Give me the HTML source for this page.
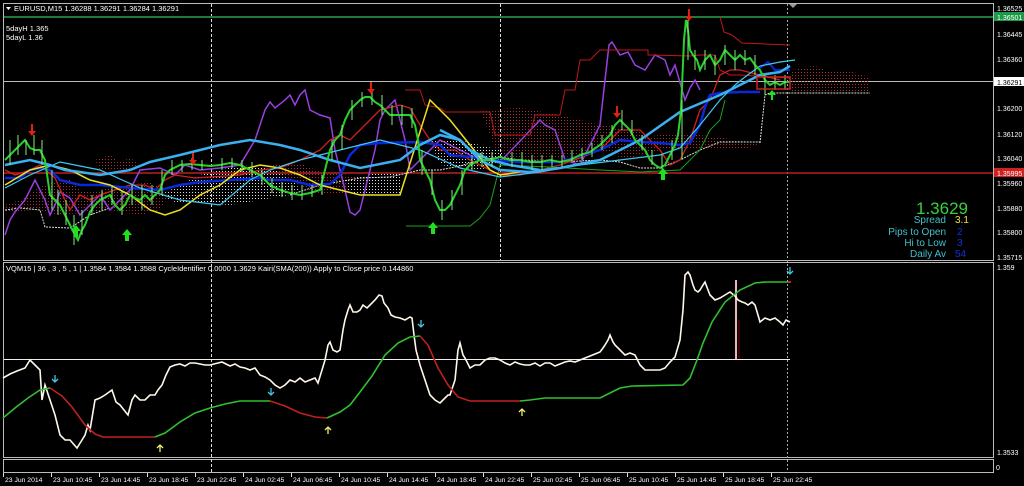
<!DOCTYPE html>
<html><head><meta charset="utf-8"><style>
html,body{margin:0;padding:0;background:#000;width:1024px;height:486px;overflow:hidden}
svg{display:block}
text{font-family:"Liberation Sans",sans-serif;font-size:8px;fill:#fff}
</style></head><body>
<svg width="1024" height="486" viewBox="0 0 1024 486" xmlns="http://www.w3.org/2000/svg">
<defs>
<pattern id="dr" width="3" height="3" patternUnits="userSpaceOnUse"><rect x="0" y="0" width="1" height="1" fill="#b03030"/></pattern>
<pattern id="dw" width="3" height="3" patternUnits="userSpaceOnUse"><rect x="0" y="0" width="1" height="1" fill="#ddd"/></pattern>
</defs>
<rect width="1024" height="486" fill="#000"/>
<rect x="3.5" y="3.5" width="990" height="257" fill="none" stroke="#bbb"/>
<rect x="3.5" y="262.5" width="990" height="195" fill="none" stroke="#bbb"/>
<rect x="3.5" y="459.5" width="990" height="13" fill="none" stroke="#bbb"/>
<line x1="211.5" y1="4" x2="211.5" y2="473" stroke="#ddd" stroke-dasharray="3,2"/>
<line x1="500.5" y1="4" x2="500.5" y2="260" stroke="#ddd" stroke-dasharray="3,2"/>
<line x1="787.5" y1="4" x2="787.5" y2="473" stroke="#aaa" stroke-dasharray="2,2"/>
<line x1="4" y1="17" x2="993" y2="17" stroke="#1d7a3a" stroke-width="2"/>
<line x1="4" y1="81.5" x2="993" y2="81.5" stroke="#bbb"/>
<line x1="4" y1="173" x2="993" y2="173" stroke="#b82020" stroke-width="1.5"/>
<line x1="4" y1="359.5" x2="790" y2="359.5" stroke="#eee"/>
<path d="M6 7 L11 7 L8.5 10 Z" fill="#fff"/>
<text x="14" y="11" style="font-size:7.5px">EURUSD,M15  1.36288 1.36291 1.36284 1.36291</text>
<text x="6" y="31" style="font-size:7.5px">5dayH 1.365</text>
<text x="6" y="40" style="font-size:7.5px">5dayL 1.36</text>
<path d="M5 205 L20 200 L35 190 L50 182 L70 180 L80 190 L100 195 L120 200 L130 205 L110 210 L60 215 L35 210 L5 212Z" fill="url(#dr)"/>
<path d="M95 160 L110 155 L120 162 L130 158 L140 164 L125 172 L100 170Z" fill="url(#dr)"/>
<path d="M75 195 L100 190 L130 185 L150 182 L170 194 L160 210 L140 215 L110 210 L85 210Z" fill="url(#dr)"/>
<path d="M160 195 L200 175 L240 165 L280 170 L290 175 L300 190 L290 195 L260 200 L230 205 L200 203 L175 202Z" fill="url(#dw)"/>
<path d="M270 165 L300 163 L320 172 L350 175 L360 178 L360 195 L320 195 L290 180Z" fill="url(#dr)"/>
<path d="M480 110 L520 108 L560 115 L600 125 L640 130 L650 145 L620 150 L580 155 L540 160 L500 160Z" fill="url(#dr)"/>
<path d="M430 140 L460 140 L480 145 L500 150 L510 160 L480 170 L440 165Z" fill="url(#dw)"/>
<path d="M620 140 L660 135 L700 135 L740 140 L760 145 L740 150 L700 150 L660 150 L630 158 L618 160Z" fill="url(#dr)"/>
<path d="M790 72 L800 68 L815 66 L825 70 L845 70 L860 74 L870 78 L870 93 L790 93Z" fill="url(#dr)"/>
<path d="M345 180 L380 172 L400 172 L400 195 L370 195 L350 195Z" fill="url(#dw)"/>
<polyline points="5,210 20,208 40,210 45,227 70,228 90,215 110,208" fill="none" stroke="#ddd" stroke-dasharray="2,1"/>
<polyline points="290,195 320,185 360,178 390,177 420,170 440,170 460,166 480,160 500,157 520,160 560,162 600,160 620,162 640,168 660,168 680,160 700,150 720,142 760,142" fill="none" stroke="#ddd" stroke-dasharray="2,1"/>
<polyline points="760,143 765,95 770,93 790,93 870,93" fill="none" stroke="#ddd" stroke-dasharray="2,1"/>
<polyline points="5,235 10,220 15,212 25,200 30,190 35,180 40,190 45,200 50,215 55,205 60,192 70,198 80,215 90,205 100,195 110,210 130,190 140,170 160,168 175,175 185,165 200,170 220,168 240,165 255,140 265,110 270,102 275,108 285,100 290,95 295,105 300,95 305,90 310,110 320,115 330,118 335,150 340,170 345,190 350,212 355,215 360,210 365,190 375,150 380,120 385,110 395,100 400,120 405,140 410,170 420,160 430,150 440,140 460,150 480,160 500,162 540,120 545,125 555,130 565,160 580,165 600,125 605,80 609,45 612,42 620,55 628,52 635,65 645,70 655,55 665,60 670,75 675,65 685,100 690,88 695,80 700,90" fill="none" stroke="#9a3fe0" stroke-width="1.5"/>
<polyline points="5,170 15,175 30,170 40,165 55,178 65,200 70,210 80,195 90,200 100,195 115,190 130,185 145,185 155,190 165,180 175,175 195,178 240,175 260,170 280,168 300,160 320,150 330,140 340,135 350,140 360,130 370,120 380,110 400,105 410,108 420,125 430,140 440,150 455,150 470,160 480,165 500,175 520,175 540,170 560,165 580,158 600,150 610,140 620,130 640,130 650,140 660,150 670,165 680,160 690,140 700,110 710,100 720,75 730,70 740,70 760,75 780,80" fill="none" stroke="#d02020" stroke-width="1.3"/>
<polyline points="405,90 420,90 425,105 440,108 445,112 490,112 495,135 530,135 535,115 560,115 565,90 575,90 580,60 590,60 600,50 648,50 648,55 650,55 690,56 700,55 715,55 720,70 730,75 740,75 790,78" fill="none" stroke="#c01818" stroke-width="1"/>
<polyline points="720,17 724,32 732,35 742,43 790,45" fill="none" stroke="#c01818" stroke-width="1"/>
<polyline points="406,226 470,226 480,218 490,205 495,185 500,165 550,167 600,170 640,172 680,170 700,150 710,130 720,120 725,100" fill="none" stroke="#1ca01c" stroke-width="1"/>
<polyline points="5,178 20,178 30,170 40,168 50,170 60,180 80,185 100,185 130,188 160,190 180,185 200,182 230,180 260,178 270,180 290,180 310,185 330,184 340,175 350,155 360,145 380,143 420,142 440,145 450,155 470,157 490,160 520,162 560,162 600,150 620,140 640,142 660,143 680,145 690,143 700,125 705,107 710,95 720,93 740,92 760,92" fill="none" stroke="#0a28d8" stroke-width="2.5"/>
<polyline points="760,68 768,62 775,70 790,70" fill="none" stroke="#0a28d8" stroke-width="2"/>
<polyline points="5,185 30,170 50,165 70,170 90,180 110,185 130,195 150,210 165,215 180,210 200,195 220,185 240,170 260,165 280,168 300,175 320,185 340,190 360,195 400,195 430,100 450,120 470,145 490,170 500,175 520,172" fill="none" stroke="#f0e020" stroke-width="1.5"/>
<polyline points="5,188 30,175 60,162 100,170 140,188 180,200 220,205 250,180 270,170 300,160 340,150 380,140 420,150 460,168 500,177 540,172 580,165 620,160 660,155 680,148 700,125 720,100 735,85 745,77 760,66 780,62 795,60" fill="none" stroke="#40c8f0" stroke-width="1.2"/>
<polyline points="5,165 30,160 50,165 65,170 80,172 100,175 130,170 150,162 180,155 220,145 250,140 280,145 300,150 330,160 360,168 400,160 420,145 440,135 460,140 480,160 500,170 530,172 560,168 600,160 640,140 680,112 720,95 740,85 760,75 780,72 790,66" fill="none" stroke="#3ab0f0" stroke-width="2.5"/>
<polyline points="440,130 460,140 470,150 490,160 510,165 540,170" fill="none" stroke="#3ab0f0" stroke-width="2.5"/>
<g fill="none" stroke="#2ad02a">
<polyline stroke-width="2" points="5,160 10,155 15,150 20,145 25,140 30,148 35,150 40,150 45,160 50,195 55,200 60,205 65,215 70,225 75,235 78,240 82,230 85,225 90,212 95,205 100,200 110,195 115,205 120,210 125,205 130,195 135,198 140,200 145,195 150,200 155,195 160,190 165,175 170,170 180,165 190,164 200,165 210,166 220,165 230,163 240,165 250,170 260,175 270,185 280,190 290,193 300,195 310,193 320,190 325,170 330,150 335,140 340,135 345,120 350,110 355,105 360,100 365,97 370,97 375,102 380,105 385,110 390,115 400,115 410,115 415,125 418,140 420,160 425,170 430,180 435,200 440,210 445,210 450,205 455,195 460,185 465,170 470,165 480,160 490,160 500,157 510,160 520,160 530,162 540,162 550,160 560,162 570,160 580,155 590,152 600,145 610,135 615,125 620,120 625,125 630,130 635,140 640,145 645,150 650,160 655,165 660,168 665,165 670,155 675,145 678,135 681,110 684,40 686,20 688,30 690,50 693,55 697,60 700,70 705,60 710,55 715,65 720,60 725,50 730,55 735,60 740,55 745,60 750,58 755,65 760,70 765,80 770,85 775,82 780,85 785,82 790,82"/>
</g>
<g stroke="#7ef07e" stroke-width="1">
<path d="M10 140v25M18 135v20M26 140v15M34 135v20M42 140v25M52 170v40M58 190v25M66 200v25M74 215v30M82 210v25M92 195v20M102 190v20M112 185v20M122 190v25M132 185v20M142 185v25M152 185v20M162 170v25M172 160v15M182 160v12M192 158v12M202 160v10M222 158v12M232 158v10M242 160v12M252 162v15M262 170v15M272 178v15M282 182v15M292 185v15M302 185v15M312 185v12M322 175v20M332 140v20M342 125v25M352 100v20M362 92v15M372 90v15M382 95v20M392 105v20M402 105v20M412 108v20M422 150v25M432 170v25M442 200v20M452 190v20M462 170v25M472 155v15M482 152v15M492 152v15M512 152v15M522 152v15M532 155v15M542 155v15M552 155v12M562 155v12M572 150v12M582 148v12M592 143v14M602 135v15M612 125v18M622 110v20M632 120v15M642 135v15M652 150v15M662 155v15M672 140v20M682 100v60M688 20v40M695 50v20M705 50v20M715 55v20M725 45v20M735 50v20M745 50v15M755 55v20M765 75v20M775 75v15M785 75v15"/>
</g>
<rect x="757" y="77" width="33" height="12" fill="none" stroke="#d02020" stroke-width="1.5"/>
<g fill="#e02010">
<path d="M32 124 l-4 5 h3 v7 h2 v-7 h3z" transform="rotate(180 32 130)"/>
<path d="M193 153 l-4 5 h3 v7 h2 v-7 h3z" transform="rotate(180 193 159)"/>
<path d="M371 82 l-4 5 h3 v7 h2 v-7 h3z" transform="rotate(180 371 88)"/>
<path d="M617 106 l-4 5 h3 v7 h2 v-7 h3z" transform="rotate(180 617 112)"/>
<path d="M689 9 l-4 5 h3 v7 h2 v-7 h3z" transform="rotate(180 689 15)"/>
</g>
<g fill="#20e020">
<path d="M76 225 l-5 6 h3 v6 h4 v-6 h3z"/>
<path d="M127 229 l-5 6 h3 v6 h4 v-6 h3z"/>
<path d="M433 222 l-5 6 h3 v6 h4 v-6 h3z"/>
<path d="M663 168 l-5 6 h3 v6 h4 v-6 h3z"/>
<path d="M772 90 l-4 5 h3 v5 h2 v-5 h3z"/>
</g>
<path d="M789 4 l4 4 l4 -4z" fill="#999"/>
<text x="968" y="214" text-anchor="end" style="font-size:17px;fill:#3ad03a">1.3629</text>
<text x="946" y="223" text-anchor="end" style="font-size:10px;fill:#40c0c8">Spread</text>
<text x="955" y="223" style="font-size:10px;fill:#f0e040">3.1</text>
<text x="946" y="235" text-anchor="end" style="font-size:10px;fill:#40c0c8">Pips to Open</text>
<text x="957" y="235" style="font-size:10px;fill:#1030e0">2</text>
<text x="946" y="246" text-anchor="end" style="font-size:10px;fill:#40c0c8">Hi to Low</text>
<text x="957" y="246" style="font-size:10px;fill:#1030e0">3</text>
<text x="946" y="257" text-anchor="end" style="font-size:10px;fill:#40c0c8">Daily Av</text>
<text x="955" y="257" style="font-size:10px;fill:#1030e0">54</text>
<g style="font-size:7px">
<text x="997" y="11" style="font-size:7px">1.36525</text>
<rect x="994" y="12" width="30" height="9" fill="#1c9a4a"/>
<text x="997" y="20" style="font-size:7px">1.36501</text>
<text x="997" y="37" style="font-size:7px">1.36445</text>
<text x="997" y="62" style="font-size:7px">1.36360</text>
<rect x="994" y="77" width="30" height="9" fill="#fff"/>
<text x="997" y="85" style="font-size:7px;fill:#000">1.36291</text>
<text x="997" y="111" style="font-size:7px">1.36200</text>
<text x="997" y="137" style="font-size:7px">1.36120</text>
<text x="997" y="161" style="font-size:7px">1.36040</text>
<rect x="994" y="168" width="30" height="9" fill="#d02020"/>
<text x="997" y="176" style="font-size:7px">1.35995</text>
<text x="997" y="186" style="font-size:7px">1.35960</text>
<text x="997" y="211" style="font-size:7px">1.35880</text>
<text x="997" y="235" style="font-size:7px">1.35800</text>
<text x="997" y="260" style="font-size:7px">1.35715</text>
<text x="997" y="270" style="font-size:7px">1.359</text>
<text x="997" y="455" style="font-size:7px">1.3533</text>
<text x="996" y="470" style="font-size:7px">0</text>
</g>
<text x="6" y="271" style="font-size:7.5px">VQM15 |  36 , 3 , 5 , 1  |  1.3584 1.3584 1.3588  CycleIdentifier 0.0000 1.3629  Kairi(SMA(200)) Apply to Close price 0.144860</text>
<line x1="736" y1="280" x2="736" y2="359" stroke="#e8b8b8" stroke-width="2"/>
<line x1="739" y1="320" x2="739" y2="359" stroke="#400" stroke-width="2"/>
<polyline fill="none" stroke="#fff8ea" stroke-width="1.6" points="3,378 10,374 17,371 25,368 30,360 35,365 40,370 42,400 45,385 50,400 55,415 60,435 65,440 70,440 77,448 82,440 85,435 88,425 90,430 95,400 100,398 105,395 112,390 116,402 120,405 124,410 128,415 132,400 135,395 140,400 145,400 150,395 155,395 158,390 162,385 166,375 170,367 175,365 180,364 185,366 190,363 195,363 200,364 205,365 210,365 218,363 222,362 230,366 235,364 240,367 245,368 250,370 255,368 260,375 265,377 270,380 275,385 280,388 285,385 290,380 295,382 300,378 305,382 310,380 315,378 318,383 322,370 325,360 328,345 330,342 333,350 337,352 340,350 343,330 345,320 348,310 350,305 353,312 357,312 360,310 363,305 367,308 370,305 375,300 379,295 382,296 384,303 388,308 391,315 395,317 400,318 405,320 410,317 412,318 414,335 416,350 420,365 425,380 430,395 435,400 440,403 445,398 448,395 450,395 455,380 458,350 460,343 463,355 465,358 470,368 475,365 480,365 485,360 490,358 495,358 500,360 505,363 510,365 515,362 520,364 525,365 530,365 535,363 540,366 545,363 550,363 555,366 560,364 565,362 570,361 575,362 580,360 585,358 590,356 595,354 600,352 603,348 605,345 608,340 610,335 613,342 615,345 620,350 625,355 630,353 635,355 640,365 645,370 650,370 655,370 660,370 665,368 670,362 675,357 680,340 683,310 685,275 688,272 690,275 693,285 695,290 698,292 700,290 703,285 705,282 708,290 710,295 713,298 715,300 720,298 725,295 730,292 735,296 738,300 742,302 745,303 748,305 752,302 755,305 758,315 760,322 765,318 770,320 775,318 780,322 783,325 786,320 790,322"/>
<polyline fill="none" stroke="#30c030" stroke-width="1.6" points="3,418 15,408 28,398 40,390 50,388"/>
<polyline fill="none" stroke="#c02020" stroke-width="1.6" points="50,388 62,396 72,407 85,425 95,434 103,437 155,437"/>
<polyline fill="none" stroke="#30c030" stroke-width="1.6" points="155,437 165,433 180,422 195,413 210,408 225,404 240,401 270,401"/>
<polyline fill="none" stroke="#c02020" stroke-width="1.6" points="270,401 285,406 300,413 315,417 327,418"/>
<polyline fill="none" stroke="#30c030" stroke-width="1.6" points="327,418 340,412 350,405 360,392 372,376 385,355 398,343 410,337 420,336"/>
<polyline fill="none" stroke="#c02020" stroke-width="1.6" points="420,336 428,345 438,368 448,385 458,397 470,401 520,401"/>
<polyline fill="none" stroke="#30c030" stroke-width="1.6" points="520,401 530,400 545,398 600,398 610,393 620,388 632,386 683,385 690,378 697,360 703,343 712,322 725,302 740,290 755,283 765,282 790,282"/>
<rect x="788" y="281" width="3" height="2" fill="#d02020"/>
<g stroke-width="1.3" fill="none" stroke="#40c8e0">
<path d="M55 375v7M52 379l3 3l3-3"/>
<path d="M271 388v7M268 392l3 3l3-3"/>
<path d="M421 320v7M418 324l3 3l3-3"/>
<path d="M790 267v7M787 271l3 3l3-3"/>
</g>
<g stroke-width="1.3" fill="none" stroke="#f0f070">
<path d="M160 452v-7M157 448l3-3l3 3"/>
<path d="M328 434v-7M325 430l3-3l3 3"/>
<path d="M522 416v-7M519 412l3-3l3 3"/>
</g>
<g stroke="#ddd">
<path d="M3.5 473v4M51.5 473v4M99.5 473v4M147.5 473v4M195.5 473v4M243.5 473v4M291.5 473v4M339.5 473v4M387.5 473v4M435.5 473v4M483.5 473v4M531.5 473v4M579.5 473v4M627.5 473v4M675.5 473v4M723.5 473v4M771.5 473v4"/>
</g>
<g>
<text x="5" y="482" style="font-size:6.8px">23 Jun 2014</text>
<text x="53" y="482" style="font-size:6.8px">23 Jun 10:45</text>
<text x="101" y="482" style="font-size:6.8px">23 Jun 14:45</text>
<text x="149" y="482" style="font-size:6.8px">23 Jun 18:45</text>
<text x="197" y="482" style="font-size:6.8px">23 Jun 22:45</text>
<text x="245" y="482" style="font-size:6.8px">24 Jun 02:45</text>
<text x="293" y="482" style="font-size:6.8px">24 Jun 06:45</text>
<text x="341" y="482" style="font-size:6.8px">24 Jun 10:45</text>
<text x="389" y="482" style="font-size:6.8px">24 Jun 14:45</text>
<text x="437" y="482" style="font-size:6.8px">24 Jun 18:45</text>
<text x="485" y="482" style="font-size:6.8px">24 Jun 22:45</text>
<text x="533" y="482" style="font-size:6.8px">25 Jun 02:45</text>
<text x="581" y="482" style="font-size:6.8px">25 Jun 06:45</text>
<text x="629" y="482" style="font-size:6.8px">25 Jun 10:45</text>
<text x="677" y="482" style="font-size:6.8px">25 Jun 14:45</text>
<text x="725" y="482" style="font-size:6.8px">25 Jun 18:45</text>
<text x="773" y="482" style="font-size:6.8px">25 Jun 22:45</text>
</g>
</svg>
</body></html>
